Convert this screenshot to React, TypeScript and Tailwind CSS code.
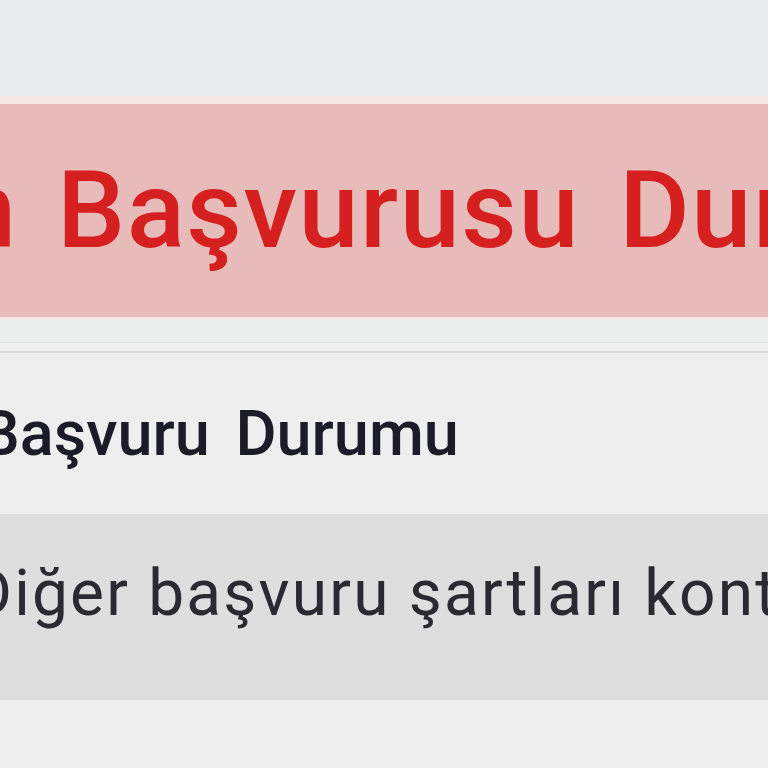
export default function App() {
  return (
    <div
      className="w-[768px] h-[768px] overflow-hidden bg-[#eeeeee] whitespace-nowrap"
      style={{ fontFamily: 'Roboto, "Liberation Sans", sans-serif' }}
    >
      <div className="h-[96px] bg-[#eaeded]" />
      <div className="border-t-[8px] border-b-[3px] border-[#f7e6e6] bg-[#e8bbbb]">
        <div className="pt-[52px] pb-[53px]">
          <h1 className="ml-[-44px] text-[108px] leading-[108px] font-medium tracking-[1.5px] [word-spacing:11px] text-[#d61f1f]">
            n Başvurusu Durumu
          </h1>
        </div>
      </div>
      <div className="h-[22px] bg-[#eceeee]" />
      <div className="border-t border-[#e4e4e4] h-[9px] bg-[#efefef]" />
      <div className="border-t-2 border-[#dcdcdc] pt-[49px] pb-[49px]">
        <h2 className="ml-[-20px] text-[63px] leading-[63px] font-medium [word-spacing:10px] text-[#1c1c28]">
          Başvuru Durumu
        </h2>
      </div>
      <div className="bg-[#dedede] pt-[48px] pb-[75px]">
        <p className="ml-[-30px] text-[64px] leading-[63px] tracking-[2.2px] text-[#2a2a30]">
          Diğer başvuru şartları kontrol ediliyor
        </p>
      </div>
    </div>
  );
}
